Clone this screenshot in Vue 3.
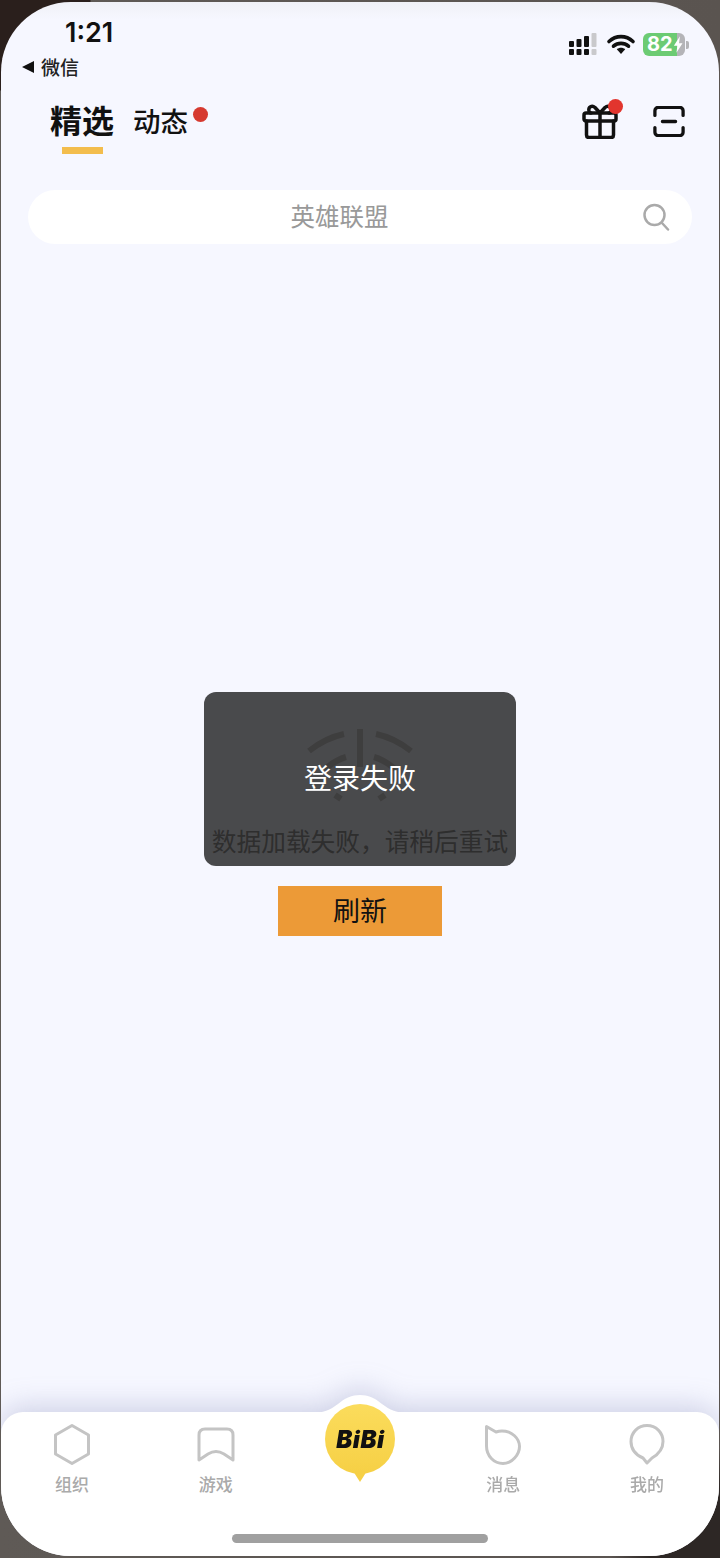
<script setup>
const tabs = [
  { label: '组织', icon: 'M20 2.5 36.5 12v19L20 40.5 3.5 31V12Z' },
  { label: '游戏', icon: 'M9 6h22c4 0 6 2 6 6v25l-9-6c-5-3-11-3-16 0l-9 6V12c0-4 2-6 6-6Z' },
  { label: 'BiBi', center: true },
  { label: '消息', icon: 'M3.5 3.5 13 9c2-.7 4-1 6-1 10 0 17.500 7.500 17.500 15.500S29 40.500 20 40.500 3.500 33 3.500 23Z' },
  { label: '我的', icon: 'M20 2.500c9 0 16 7 16 16 0 8-5 13-11 16.500l-5 5-4-5C9 32 4 26.500 4 18.500c0-9 7-16 16-16Z' }
]
</script>

<template>
  <div class="phone">
    <div class="screen">
      <header class="status">
        <div class="status-left">
          <div class="time">1:21</div>
          <div class="back"><span class="back-arrow"></span>微信</div>
        </div>
        <div class="status-right">
          <svg width="30" height="24" viewBox="0 0 30 24">
            <g fill="#111">
              <rect x="1" y="8" width="5" height="6" rx="1" />
              <rect x="1" y="16" width="5" height="6" rx="1" />
              <rect x="8.500" y="6" width="5" height="8" rx="1" />
              <rect x="8.500" y="16" width="5" height="6" rx="1" />
              <rect x="16" y="3" width="5" height="11" rx="1" />
              <rect x="16" y="16" width="5" height="6" rx="1" />
            </g>
            <g fill="#c9c9cc">
              <rect x="23.500" y="0" width="5" height="14" rx="1" />
              <rect x="23.500" y="16" width="5" height="6" rx="1" />
            </g>
          </svg>
          <svg class="wifi" width="30" height="22" viewBox="0 0 30 22">
            <path d="M3 8.500c7-6.500 17-6.500 24 0M7.500 13.200c4.400-3.800 10.600-3.800 15 0" fill="none" stroke="#111" stroke-width="3.600" stroke-linecap="round" />
            <path d="M10.800 16.300c2.500-2 5.900-2 8.400 0L15 21Z" fill="#111" />
          </svg>
          <div class="battery">
            <div class="battery-body">
              <span class="battery-num">82</span>
              <svg class="bolt" width="12" height="19" viewBox="0 0 12 19"><path d="M8 0 1 11h4l-1 8 7-11H7Z" fill="#fff" /></svg>
            </div>
            <span class="battery-nub"></span>
          </div>
        </div>
      </header>

      <nav class="topbar">
        <div class="tab-active">
          <span>精选</span>
          <i class="underline"></i>
        </div>
        <div class="tab-other">动态<i class="dot dot-tab"></i></div>
        <div class="top-icons">
          <div class="gift">
            <svg width="36" height="36" viewBox="0 0 36 36" fill="none" stroke="#111" stroke-width="3.500" stroke-linejoin="round" stroke-linecap="round">
              <rect x="2" y="10" width="32" height="8" rx="2" />
              <path d="M4.500 18v14c0 1.500 1 2.500 2.500 2.500h22c1.500 0 2.500-1 2.500-2.500V18M18 10v24.500" />
              <path d="M18 10 13 4.500C10 2 6 4 7 8c.3 1 1 2 2 2M18 10l5-5.500C26 2 30 4 29 8c-.3 1-1 2-2 2" />
            </svg>
            <i class="dot dot-gift"></i>
          </div>
          <svg width="32" height="31" viewBox="0 0 34 33" fill="none" stroke="#111" stroke-width="3.500" stroke-linecap="round">
            <path d="M2 10V5c0-2 1.500-3.500 3.500-3.500h23C30.500 1.500 32 3 32 5v5M2 23v5c0 2 1.500 3.500 3.500 3.500h23c2 0 3.500-1.500 3.500-3.500v-5M10 16.500h14" />
          </svg>
        </div>
      </nav>

      <div class="search">
        <span class="search-text">英雄联盟</span>
        <svg class="search-icon" width="28" height="28" viewBox="0 0 28 28" fill="none" stroke="#aaa" stroke-width="2.500" stroke-linecap="round">
          <circle cx="12.500" cy="12" r="10" />
          <path d="m20 20 6 6.500" />
        </svg>
      </div>

      <main class="content">
        <svg class="loader" width="110" height="84" viewBox="0 0 110 84" fill="none" stroke="#d0d0d0" stroke-width="6">
          <path d="M4 31C14 23 25 17 39 14M106 31C96 23 85 17 71 14M55 9v38M20 49c6-5 14-10 21-12M90 49c-6-5-14-10-21-12M30 75l6 4M80 75l-6 4" />
        </svg>
        <p class="fail-text">数据加载失败，请稍后重试</p>
        <button class="refresh">刷新</button>
        <div class="toast">登录失败</div>
      </main>

      <footer class="tabbar">
        <svg class="bump" width="100" height="18" viewBox="0 0 100 18"><path d="M0 18c14 0 20-3 28-9C35 3 42 0 50 0s15 3 22 9c8 6 14 9 28 9Z" fill="#fff" /></svg>
        <div class="tab-list">
          <div v-for="tab in tabs" :key="tab.label" class="tab-item">
            <div v-if="tab.center" class="bibi">
              <span>BiBi</span>
              <i class="bibi-tail"></i>
            </div>
            <template v-else>
              <svg width="40" height="43" viewBox="0 0 40 43" fill="none" stroke="#c4c4c4" stroke-width="3" stroke-linejoin="round">
                <path :d="tab.icon" />
              </svg>
              <span class="tab-label">{{ tab.label }}</span>
            </template>
          </div>
        </div>
        <div class="home-bar"></div>
      </footer>
    </div>
  </div>
</template>

<style>
html, body {
  margin: 0;
  padding: 0;
}
</style>

<style scoped>
.phone {
  box-sizing: border-box;
  width: 720px;
  height: 1558px;
  padding: 2px 1px;
  overflow: hidden;
  background:
    radial-gradient(circle at 0 0, #2a1f1c 0, #2a1f1c 90px, transparent 91px),
    radial-gradient(circle at 100% 100%, #2d2725 0, #2d2725 70px, transparent 110px),
    linear-gradient(90deg, #5f5a56, #5a5450);
  font-family: "Noto Sans CJK SC", "Noto Sans", sans-serif;
}

.screen {
  position: relative;
  height: 100%;
  display: flex;
  flex-direction: column;
  border-radius: 70px;
  overflow: hidden;
  background: linear-gradient(180deg, #f0f1f7 0, #f6f7ff 18px);
}

.status {
  display: flex;
  justify-content: space-between;
  height: 96px;
  padding: 0 30px 0 21px;
  flex-shrink: 0;
}

.time {
  margin: 15px 0 0 43px;
  font-family: Inter, sans-serif;
  font-size: 27px;
  line-height: 32px;
  font-weight: 600;
  color: #111;
}

.back {
  display: flex;
  align-items: center;
  margin-top: 4px;
  font-size: 19px;
  line-height: 28px;
  font-weight: 500;
  color: #222;
}

.back-arrow {
  width: 0;
  height: 0;
  margin-right: 7px;
  border-style: solid;
  border-width: 6px 12px 6px 0;
  border-color: transparent #111 transparent transparent;
}

.status-right {
  display: flex;
  align-items: flex-start;
  padding: 31px 0 0 1px;
}

.wifi {
  margin-left: 8px;
}

.battery {
  display: flex;
  align-items: center;
  margin-left: 7px;
}

.battery-body {
  position: relative;
  display: flex;
  align-items: center;
  justify-content: space-between;
  box-sizing: border-box;
  width: 42px;
  height: 23px;
  padding: 0 2px 0 4px;
  border-radius: 6px;
  background: linear-gradient(90deg, #6ccb73 0, #6ccb73 80%, #b4b4b8 80%);
}

.battery-num {
  font-family: Inter, sans-serif;
  font-size: 20px;
  line-height: 23px;
  font-weight: 700;
  color: #fff;
}

.battery-nub {
  width: 3px;
  height: 8px;
  margin-left: 1px;
  border-radius: 0 2px 2px 0;
  background: #b4b4b8;
}

.topbar {
  display: flex;
  align-items: flex-start;
  height: 92px;
  padding: 0 34px 0 48px;
  flex-shrink: 0;
}

.tab-active {
  display: flex;
  flex-direction: column;
  align-items: center;
  width: 66px;
  font-size: 32px;
  line-height: 42px;
  font-weight: 700;
  color: #111;
}

.underline {
  width: 41px;
  height: 7px;
  margin-top: 7px;
  background: #f3bd4d;
}

.tab-other {
  position: relative;
  margin: 2px 0 0 18px;
  font-size: 27.500px;
  line-height: 40px;
  font-weight: 500;
  color: #111;
}

.dot {
  position: absolute;
  width: 15px;
  height: 15px;
  border-radius: 50%;
}

.dot-tab {
  top: 7px;
  right: -20px;
  background: #d63a30;
}

.top-icons {
  display: flex;
  align-items: center;
  gap: 35px;
  margin-left: auto;
  padding-top: 5px;
}

.gift {
  position: relative;
  display: flex;
}

.dot-gift {
  top: -4px;
  right: -5px;
  background: #e2352e;
}

.search {
  position: relative;
  display: flex;
  align-items: center;
  justify-content: center;
  height: 54px;
  margin: 0 27px;
  border-radius: 27px;
  background: #fff;
  flex-shrink: 0;
}

.search-text {
  margin-left: -41px;
  padding-bottom: 4px;
  font-size: 24.500px;
  color: #999;
}

.search-icon {
  position: absolute;
  right: 22px;
  top: 13px;
}

.content {
  position: relative;
  flex: 1;
  display: flex;
  flex-direction: column;
  align-items: center;
  justify-content: center;
}

.loader {
  display: block;
}

.fail-text {
  margin: 18px 0 0;
  font-size: 24.700px;
  line-height: 36px;
  color: #999;
}

.refresh {
  width: 164px;
  height: 50px;
  margin-top: 28px;
  padding: 0 0 3px;
  border: none;
  background: #ec9a37;
  font-family: inherit;
  font-size: 27px;
  color: #111;
}

.toast {
  position: absolute;
  left: 203px;
  top: 448px;
  box-sizing: border-box;
  width: 312px;
  height: 174px;
  padding-top: 63px;
  border-radius: 12px;
  background: rgba(0, 0, 0, 0.7);
  font-size: 28px;
  line-height: 44px;
  text-align: center;
  color: #fff;
}

.tabbar {
  position: relative;
  height: 144px;
  flex-shrink: 0;
  border-radius: 22px 22px 0 0;
  background: #fff;
  filter: drop-shadow(0 -5px 14px rgba(110, 115, 170, 0.3));
}

.bump {
  position: absolute;
  left: 309px;
  top: -17px;
}

.tab-list {
  display: flex;
  margin-left: -1px;
  padding-top: 11px;
}

.tab-item {
  position: relative;
  flex: 1;
  display: flex;
  flex-direction: column;
  align-items: center;
}

.tab-label {
  margin-top: 6px;
  font-size: 17px;
  line-height: 24px;
  font-weight: 500;
  color: #aaa;
}

.bibi {
  position: absolute;
  top: -19px;
  margin-left: 2px;
  display: flex;
  align-items: center;
  justify-content: center;
  width: 70px;
  height: 70px;
  border-radius: 50%;
  background: linear-gradient(180deg, #fbdc5c, #f6d045);
}

.bibi span {
  font-family: Inter, sans-serif;
  font-size: 24px;
  font-weight: 900;
  font-style: italic;
  letter-spacing: 0.5px;
  color: #111;
}

.bibi-tail {
  position: absolute;
  bottom: -8px;
  left: 28px;
  width: 0;
  height: 0;
  border-style: solid;
  border-width: 11px 7px 0;
  border-color: #f6d045 transparent transparent;
}

.home-bar {
  position: absolute;
  left: 231px;
  bottom: 13px;
  width: 256px;
  height: 9px;
  border-radius: 5px;
  background: #a0a0a0;
}
</style>
